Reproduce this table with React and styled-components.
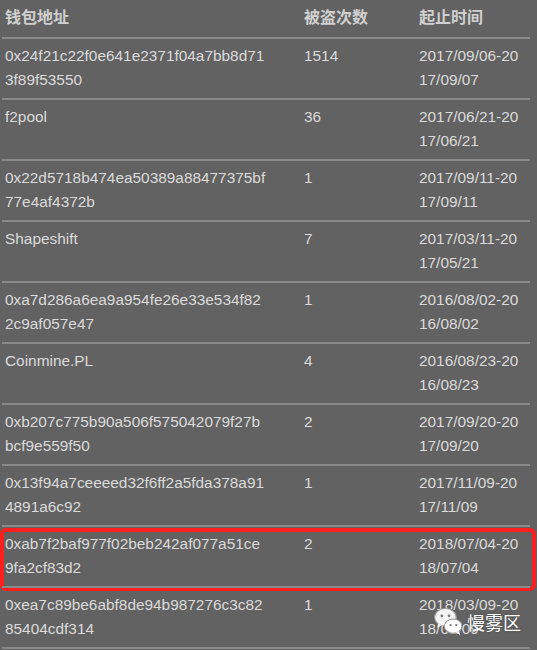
import React from "react";
import styled, { createGlobalStyle } from "styled-components";

const GlobalStyle = createGlobalStyle`
  html, body {
    margin: 0;
    padding: 0;
    background: #626262;
  }
`;

const Page = styled.div`
  position: relative;
  width: 537px;
  height: 650px;
  overflow: hidden;
  background: #626262;
  font-family: "Liberation Sans", Arial, "Noto Sans CJK SC", sans-serif;
  color: #dadada;
`;

const Table = styled.div`
  margin-left: 2px;
  width: 528px;
  border-bottom: 2px solid #8a8a8a;
`;

const Row = styled.div`
  position: relative;
  display: grid;
  grid-template-columns: 299px 115px 114px;
  padding: ${p => (p.$head ? "6px 0 7px" : "5px 0 6px")};
  border-top: ${p => (p.$head ? "none" : "2px solid #8a8a8a")};
  font-size: ${p => (p.$head ? "16px" : "15.4px")};
  font-weight: ${p => (p.$head ? "bold" : "normal")};
  line-height: 24px;

  ${p =>
    p.$marked &&
    `
    &::after {
      content: "";
      position: absolute;
      top: 1px;
      bottom: -5px;
      left: -2px;
      right: -6px;
      border: 4px solid #ff1f1f;
      border-radius: 6px;
      pointer-events: none;
    }
  `}
`;

const Cell = styled.div`
  padding-left: 3px;
  width: ${p => p.$w}px;
  word-break: break-all;
  color: ${p => (p.$head ? "#d0d0d0" : "#dadada")};
`;

const Line = styled.span`
  display: block;
  white-space: nowrap;
`;

const Watermark = styled.div`
  position: absolute;
  right: 16px;
  bottom: 13px;
  display: flex;
  align-items: center;
  gap: 3px;
  color: #ffffff;
  font-family: "Noto Sans CJK SC", sans-serif;
  font-size: 18px;
  text-shadow: 0 0 2px rgba(0, 0, 0, 0.3);
`;

const rows = [
  [["0x24f21c22f0e641e2371f04a7bb8d71", "3f89f53550"], "1514", "2017/09/06-2017/09/07"],
  [["f2pool"], "36", "2017/06/21-2017/06/21"],
  [["0x22d5718b474ea50389a88477375bf", "77e4af4372b"], "1", "2017/09/11-2017/09/11"],
  [["Shapeshift"], "7", "2017/03/11-2017/05/21"],
  [["0xa7d286a6ea9a954fe26e33e534f82", "2c9af057e47"], "1", "2016/08/02-2016/08/02"],
  [["Coinmine.PL"], "4", "2016/08/23-2016/08/23"],
  [["0xb207c775b90a506f575042079f27b", "bcf9e559f50"], "2", "2017/09/20-2017/09/20"],
  [["0x13f94a7ceeeed32f6ff2a5fda378a91", "4891a6c92"], "1", "2017/11/09-2017/11/09"],
  [["0xab7f2baf977f02beb242af077a51ce", "9fa2cf83d2"], "2", "2018/07/04-2018/07/04"],
  [["0xea7c89be6abf8de94b987276c3c82", "85404cdf314"], "1", "2018/03/09-2018/03/09"],
];

const WeChatIcon = () => (
  <svg width="31" height="31" viewBox="0 0 30 30">
    <ellipse cx="12" cy="11" rx="10.5" ry="8.5" fill="#f4f4f4" stroke="#9a9a9a" strokeWidth="1" />
    <path d="M5 17 L4 21 L9 18.5 Z" fill="#f4f4f4" />
    <circle cx="8.5" cy="9.5" r="1.3" fill="#777" />
    <circle cx="15.5" cy="9.5" r="1.3" fill="#777" />
    <ellipse cx="19.5" cy="19.5" rx="8.5" ry="7" fill="#ffffff" stroke="#9a9a9a" strokeWidth="1" />
    <path d="M25 24.5 L26.5 28 L22 25.8 Z" fill="#ffffff" />
    <circle cx="17" cy="18.5" r="1.1" fill="#777" />
    <circle cx="22.5" cy="18.5" r="1.1" fill="#777" />
  </svg>
);

export default function App() {
  return (
    <Page>
      <GlobalStyle />
      <Table>
        <Row $head>
          <Cell $head $w={268}>钱包地址</Cell>
          <Cell $head $w={108}>被盗次数</Cell>
          <Cell $head $w={106}>起止时间</Cell>
        </Row>
        {rows.map(([addr, count, time], i) => (
          <Row key={i} $marked={i === 8}>
            <Cell $w={280}>
              {addr.map(part => (
                <Line key={part}>{part}</Line>
              ))}
            </Cell>
            <Cell $w={108}>{count}</Cell>
            <Cell $w={106}>{time}</Cell>
          </Row>
        ))}
      </Table>
      <Watermark>
        <WeChatIcon />
        <span>慢雾区</span>
      </Watermark>
    </Page>
  );
}
